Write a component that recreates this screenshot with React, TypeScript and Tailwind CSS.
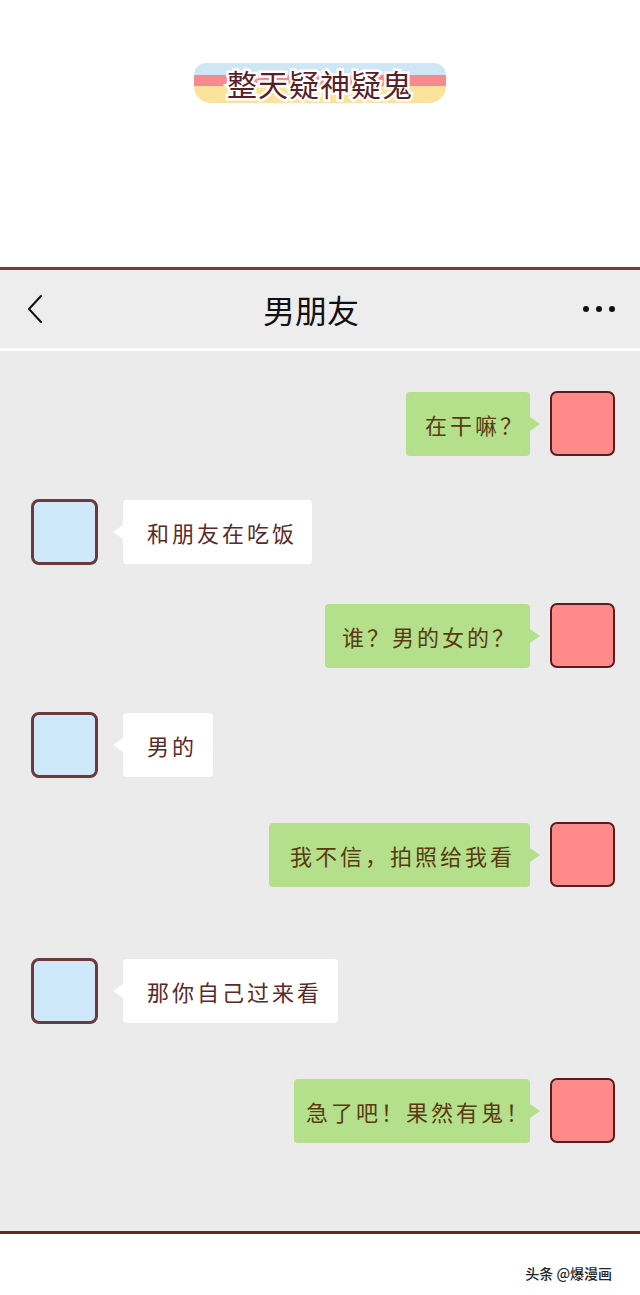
import React from "react";

type Msg = { side: "l" | "r"; text: string; w: number; pl: number; mt: number };

const msgs: Msg[] = [
  { side: "r", text: "在干嘛？", w: 124, pl: 19, mt: 40 },
  { side: "l", text: "和朋友在吃饭", w: 189, pl: 24, mt: 43 },
  { side: "r", text: "谁？男的女的？", w: 205, pl: 17, mt: 38 },
  { side: "l", text: "男的", w: 90, pl: 24, mt: 44 },
  { side: "r", text: "我不信，拍照给我看", w: 261, pl: 21, mt: 44 },
  { side: "l", text: "那你自己过来看", w: 215, pl: 24, mt: 71 },
  { side: "r", text: "急了吧！果然有鬼！", w: 236, pl: 12, mt: 54 },
];

const font = "font-['Noto_Sans_CJK_SC','Noto_Sans',sans-serif]";

function Row({ m }: { m: Msg }) {
  if (m.side === "r") {
    return (
      <div className="flex items-center justify-end pr-[25px]" style={{ marginTop: m.mt }}>
        <div className="relative flex h-[64px] items-center rounded-[4px] bg-[#b5e08b]" style={{ width: m.w, paddingLeft: m.pl }}>
          <span className="whitespace-nowrap text-[22px] leading-none tracking-[3px] text-[#5a3a12]">{m.text}</span>
          <div className="absolute right-[-10px] top-1/2 h-0 w-0 -translate-y-1/2 border-y-[7px] border-l-[10px] border-y-transparent border-l-[#b5e08b]" />
        </div>
        <div className="ml-[20px] h-[65px] w-[65px] rounded-[7px] border-2 border-[#5a1c1f] bg-[#ff8a8a]" />
      </div>
    );
  }
  return (
    <div className="flex items-center pl-[31px]" style={{ marginTop: m.mt }}>
      <div className="h-[66px] w-[67px] rounded-[8px] border-[3px] border-[#6b3a3c] bg-[#cfe9fa]" />
      <div className="relative ml-[25px] flex h-[64px] items-center rounded-[4px] bg-white" style={{ width: m.w, paddingLeft: m.pl }}>
        <span className="whitespace-nowrap text-[22px] leading-none tracking-[3px] text-[#5a2a2a]">{m.text}</span>
        <div className="absolute left-[-10px] top-1/2 h-0 w-0 -translate-y-1/2 border-y-[7px] border-r-[10px] border-y-transparent border-r-white" />
      </div>
    </div>
  );
}

export default function App() {
  return (
    <div className={`flex h-[1295px] w-[640px] flex-col overflow-hidden bg-white ${font}`}>
      {/* top banner */}
      <div className="flex h-[267px] shrink-0 justify-center pt-[63px]">
        <div className="grid h-[40px] w-[252px]">
          <div className="col-start-1 row-start-1 flex flex-col">
            <div className="h-[12px] rounded-t-full bg-[#cfe6f4]" />
            <div className="h-[11px] bg-[#f68b8d]" />
            <div className="h-[17px] rounded-b-full bg-[#fbe39b]" />
          </div>
          <div className="col-start-1 row-start-1 flex items-center justify-center">
            <span className="text-[30px] leading-none tracking-[1px] text-[#5b1f28] [-webkit-text-stroke:5px_white] [paint-order:stroke_fill]">
              整天疑神疑鬼
            </span>
          </div>
        </div>
      </div>
      <div className="h-[3px] shrink-0 bg-[#7a3b3d]" />
      {/* header */}
      <div className="flex h-[78px] shrink-0 items-center bg-[#ededed]">
        <div className="flex w-[60px] justify-center pl-[10px]">
          <svg width="18" height="30" viewBox="0 0 18 30" fill="none">
            <path d="M15 2 L3 15 L15 28" stroke="#111" strokeWidth="2" strokeLinecap="round" strokeLinejoin="round" />
          </svg>
        </div>
        <div className="flex flex-1 justify-center">
          <span className="text-[32px] font-normal leading-none text-[#111]">男朋友</span>
        </div>
        <div className="flex w-[78px] items-center justify-start gap-[7px] pl-[21px]">
          <div className="h-[6px] w-[6px] rounded-full bg-[#111]" />
          <div className="h-[6px] w-[6px] rounded-full bg-[#111]" />
          <div className="h-[6px] w-[6px] rounded-full bg-[#111]" />
        </div>
      </div>
      <div className="h-[3px] shrink-0 bg-white" />
      {/* chat */}
      <div className="flex h-[880px] shrink-0 flex-col bg-[#ebebeb]">
        {msgs.map((m, i) => (
          <Row key={i} m={m} />
        ))}
      </div>
      <div className="h-[3px] shrink-0 bg-[#5b2a2c]" />
      <div className="flex h-[64px] shrink-0 items-center justify-end pr-[28px] pt-[14px]">
        <span className="text-[14px] font-medium text-[#222]">头条 @爆漫画</span>
      </div>
    </div>
  );
}
